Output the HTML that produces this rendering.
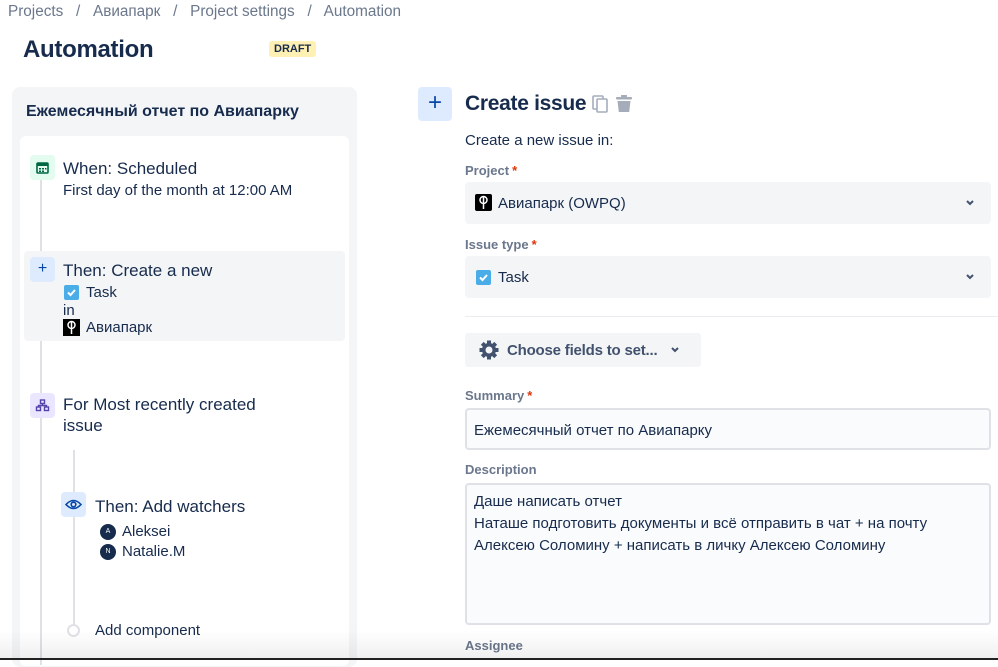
<!DOCTYPE html>
<html><head><meta charset="utf-8"><style>
*{margin:0;padding:0;box-sizing:border-box}
body{width:998px;height:660px;overflow:hidden;background:#fff;font-family:"Liberation Sans","Noto Sans CJK SC",sans-serif;color:#172b4d;position:relative}
.a{position:absolute;white-space:nowrap}
.lbl{font-size:13px;font-weight:bold;color:#6b778c}
.lbl b{color:#de350b;margin-left:3px}
.sel{position:absolute;left:465px;width:526px;height:42px;background:#f4f5f7;border-radius:4px}
.chev{position:absolute;right:16px;top:16px}
.inp{position:absolute;left:465px;width:526px;background:#fafbfc;border:2px solid #dfe1e6;border-radius:4px}
.ic{position:absolute;width:25px;height:25px;border-radius:4px}
.t17{font-size:17px}
</style></head><body>
<div class="a" style="left:8px;top:3px;font-size:15.3px;color:#6b778c">Projects &nbsp;&nbsp;/&nbsp;&nbsp; Авиапарк &nbsp;&nbsp;/&nbsp;&nbsp; Project settings &nbsp;&nbsp;/&nbsp;&nbsp; Automation</div>
<div class="a" style="left:23px;top:36px;font-size:24px;font-weight:bold;letter-spacing:-0.3px">Automation</div>
<div class="a" style="left:269px;top:41px;background:#fff0b3;border-radius:3px;font-size:11px;font-weight:bold;padding:2px 5px;color:#172b4d">DRAFT</div>

<div class="a" style="left:12px;top:87px;width:345px;height:580px;background:#f4f5f7;border-radius:8px"></div>
<div class="a" style="left:26px;top:103px;font-size:16px;font-weight:bold">Ежемесячный отчет по Авиапарку</div>
<div class="a" style="left:20px;top:136px;width:329px;height:530px;background:#fff;border-radius:6px"></div>
<div class="a" style="left:40px;top:175px;width:2px;height:490px;background:#dfe1e6"></div>

<div class="ic" style="left:30px;top:155px;background:#e3fcef"><svg width="25" height="25"><rect x="7" y="8" width="11" height="10" rx="1" fill="none" stroke="#006644" stroke-width="1.6"/><rect x="7" y="8" width="11" height="3" fill="#006644"/><rect x="9" y="13" width="2" height="1.5" fill="#006644"/><rect x="12" y="13" width="2" height="1.5" fill="#006644"/><rect x="15" y="13" width="1.5" height="1.5" fill="#006644"/><rect x="9" y="15.5" width="2" height="1.5" fill="#006644"/><rect x="12" y="15.5" width="2" height="1.5" fill="#006644"/></svg></div>
<div class="a t17" style="left:63px;top:159px">When: Scheduled</div>
<div class="a" style="left:63px;top:182px;font-size:15px">First day of the month at 12:00 AM</div>

<div class="a" style="left:24px;top:251px;width:321px;height:90px;background:#f4f5f7;border-radius:4px"></div>
<div class="ic" style="left:30px;top:257px;background:#deebff;color:#0747a6;font-size:16px;text-align:center;line-height:24px">+</div>
<div class="a t17" style="left:63px;top:261px">Then: Create a new</div>
<div class="a" style="left:64px;top:285px;width:15px;height:15px;background:#4bade8;border-radius:2px"><svg width="15" height="15"><path d="M4 7.5l2.5 2.5 4.5-5" stroke="#fff" stroke-width="2" fill="none"/></svg></div>
<div class="a" style="left:86px;top:284px;font-size:15px">Task</div>
<div class="a" style="left:63px;top:302px;font-size:15px">in</div>
<div class="a" style="left:63px;top:319px;width:17px;height:17px;background:#000"><svg width="17" height="17"><circle cx="8.5" cy="6" r="3.5" fill="none" stroke="#fff" stroke-width="1.5"/><path d="M8.5 2v13" stroke="#fff" stroke-width="1.5"/></svg></div>
<div class="a" style="left:86px;top:319px;font-size:15px">Авиапарк</div>

<div class="ic" style="left:30px;top:393px;background:#eae6ff"><svg width="25" height="25"><g fill="none" stroke="#5243aa" stroke-width="1.4"><rect x="10.5" y="7" width="4" height="3.5"/><rect x="6.5" y="14" width="4" height="3.5"/><rect x="14.5" y="14" width="4" height="3.5"/><path d="M12.5 10.5v2M8.5 14v-1.5h8V14"/></g></svg></div>
<div class="a t17" style="left:63px;top:395px">For Most recently created</div>
<div class="a t17" style="left:63px;top:416px">issue</div>
<div class="a" style="left:73px;top:450px;width:2px;height:180px;background:#dfe1e6"></div>
<div class="ic" style="left:61px;top:492px;background:#deebff"><svg width="25" height="25"><path d="M5 12.5q7.5-8 15 0q-7.5 8-15 0z" fill="none" stroke="#0747a6" stroke-width="1.6"/><circle cx="12.5" cy="12.5" r="2.3" fill="none" stroke="#0747a6" stroke-width="1.6"/></svg></div>
<div class="a t17" style="left:95px;top:497px">Then: Add watchers</div>
<div class="a" style="left:100px;top:524px;width:16px;height:16px;border-radius:50%;background:#172b4d;color:#fff;font-size:7px;text-align:center;line-height:16px">A</div>
<div class="a" style="left:122px;top:523px;font-size:15px">Aleksei</div>
<div class="a" style="left:100px;top:544px;width:16px;height:16px;border-radius:50%;background:#172b4d;color:#fff;font-size:7px;text-align:center;line-height:16px">N</div>
<div class="a" style="left:122px;top:543px;font-size:15px">Natalie.M</div>
<div class="a" style="left:67px;top:624px;width:13px;height:13px;border-radius:50%;border:2px solid #dfe1e6;background:#fff"></div>
<div class="a" style="left:95px;top:622px;font-size:15px">Add component</div>

<div class="a" style="left:418px;top:87px;width:34px;height:34px;background:#deebff;border-radius:4px;color:#0747a6;font-size:24px;text-align:center;line-height:32px">+</div>
<div class="a" style="left:465px;top:92px;font-size:21px;font-weight:bold;letter-spacing:-0.3px">Create issue</div>
<svg class="a" style="left:590px;top:94px" width="20" height="20"><rect x="3" y="2" width="10" height="13" rx="1" fill="none" stroke="#a5adba" stroke-width="1.6"/><rect x="7" y="5" width="10" height="13" rx="1" fill="#fff" stroke="#a5adba" stroke-width="1.6"/></svg>
<svg class="a" style="left:614px;top:94px" width="20" height="20"><rect x="2" y="3" width="16" height="2.5" rx="1" fill="#a5adba"/><rect x="7" y="1" width="6" height="2" fill="#a5adba"/><path d="M3.5 7h13l-1.3 11H4.8z" fill="#a5adba"/></svg>
<div class="a" style="left:465px;top:132px;font-size:15px">Create a new issue in:</div>
<div class="a lbl" style="left:465px;top:163px">Project<b>*</b></div>
<div class="sel" style="top:182px"><div class="a" style="left:10px;top:12px;width:17px;height:17px;background:#000;border-radius:2px"><svg width="17" height="17"><circle cx="8.5" cy="6" r="3.5" fill="none" stroke="#fff" stroke-width="1.5"/><path d="M8.5 2v13" stroke="#fff" stroke-width="1.5"/></svg></div><div class="a" style="left:33px;top:13px;font-size:15px">Авиапарк (OWPQ)</div><svg class="chev" width="10" height="10"><path d="M2 3l3 3 3-3" stroke="#42526e" stroke-width="2" fill="none"/></svg></div>
<div class="a lbl" style="left:465px;top:237px">Issue type<b>*</b></div>
<div class="sel" style="top:256px"><div class="a" style="left:11px;top:14px;width:15px;height:15px;background:#4bade8;border-radius:2px"><svg width="15" height="15"><path d="M4 7.5l2.5 2.5 4.5-5" stroke="#fff" stroke-width="2" fill="none"/></svg></div><div class="a" style="left:33px;top:13px;font-size:15px">Task</div><svg class="chev" width="10" height="10"><path d="M2 3l3 3 3-3" stroke="#42526e" stroke-width="2" fill="none"/></svg></div>
<div class="a" style="left:465px;top:316px;width:533px;height:1px;background:#ebecf0"></div>
<div class="a" style="left:465px;top:333px;width:236px;height:34px;background:#f4f5f7;border-radius:3px"></div>
<svg class="a" style="left:479px;top:340px" width="20" height="20"><g transform="translate(10 10)" fill="#42526e"><circle r="7"/><rect x="-2" y="-9.5" width="4" height="19"/><rect x="-2" y="-9.5" width="4" height="19" transform="rotate(45)"/><rect x="-2" y="-9.5" width="4" height="19" transform="rotate(90)"/><rect x="-2" y="-9.5" width="4" height="19" transform="rotate(135)"/><circle r="3.5" fill="#f4f5f7"/></g></svg>
<div class="a" style="left:507px;top:342px;font-size:15px;font-weight:bold;color:#42526e;letter-spacing:-0.2px">Choose fields to set...</div>
<svg class="a" style="left:670px;top:345px" width="10" height="10"><path d="M2 3l3 3 3-3" stroke="#42526e" stroke-width="2" fill="none"/></svg>
<div class="a lbl" style="left:465px;top:388px">Summary<b>*</b></div>
<div class="inp" style="top:408px;height:42px"><div class="a" style="left:7px;top:12px;font-size:15px">Ежемесячный отчет по Авиапарку</div></div>
<div class="a lbl" style="left:465px;top:462px">Description</div>
<div class="inp" style="top:483px;height:142px"><div class="a" style="left:7px;top:6px;font-size:15px;line-height:22px">Даше написать отчет<br>Наташе подготовить документы и всё отправить в чат + на почту<br>Алексею Соломину + написать в личку Алексею Соломину</div></div>
<div class="a lbl" style="left:465px;top:638px">Assignee</div>
<div class="a" style="left:0;top:630px;width:998px;height:28px;background:linear-gradient(rgba(0,0,0,0),rgba(0,0,0,0.06))"></div>
<div class="a" style="left:0;top:658px;width:998px;height:2px;background:#222"></div>
</body></html>
